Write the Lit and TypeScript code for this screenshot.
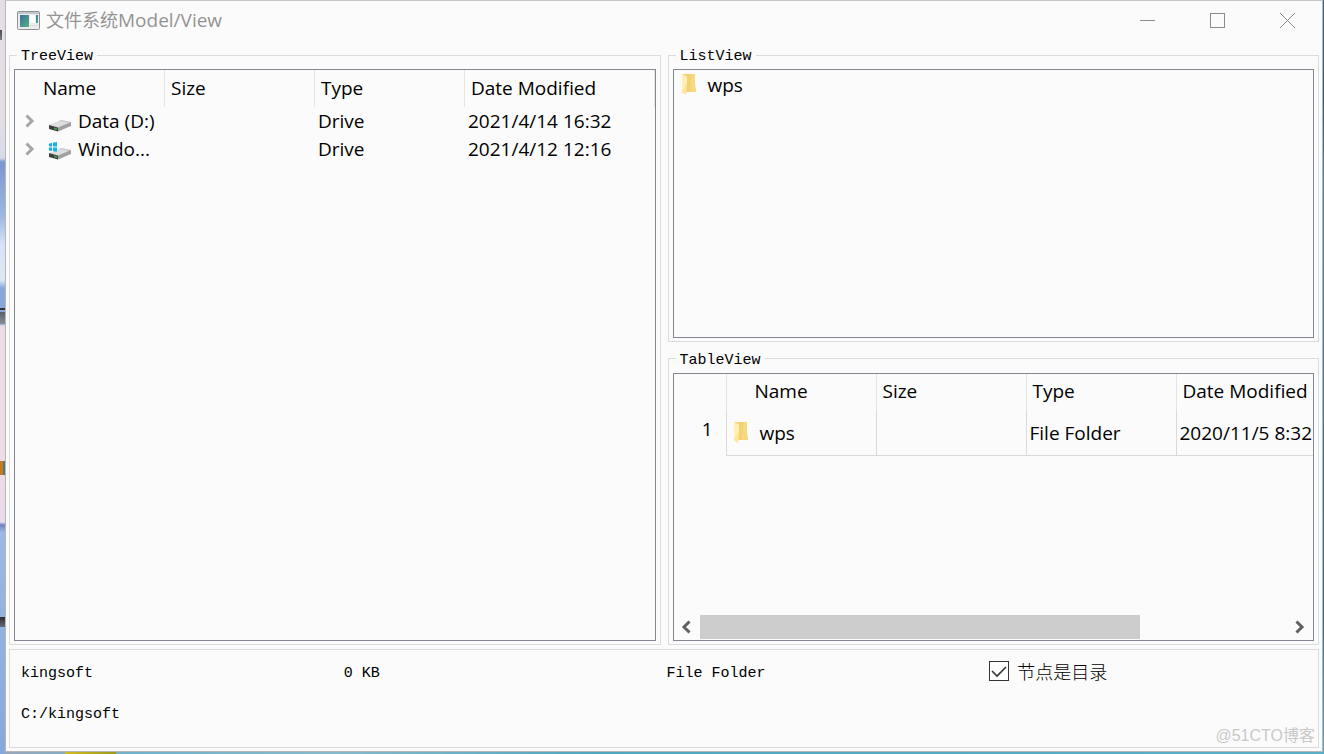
import { LitElement, html, css, svg } from "lit";
import { customElement, property, state } from "lit/decorators.js";

interface Entry {
  name: string;
  size: string;
  type: string;
  modified: string;
  system?: boolean;
}

const COLUMNS = ["Name", "Size", "Type", "Date Modified"];

const DRIVES: Entry[] = [
  { name: "Data (D:)", size: "", type: "Drive", modified: "2021/4/14 16:32" },
  { name: "Windo...", size: "", type: "Drive", modified: "2021/4/12 12:16", system: true },
];

const FOLDERS: Entry[] = [
  { name: "wps", size: "", type: "File Folder", modified: "2020/11/5 8:32" },
];

const folderIcon = html`<svg class="folder" width="16" height="22" viewBox="0 0 16 22" aria-hidden="true">
  <path d="M1 0H14V12L15 18H4L1 15Z" fill="#f3d275" />
  <path d="M1 0L6 2.500V11L5 21L1 18.500Z" fill="#ffe59a" />
  <path d="M1 0L6 3V9L1 17Z" fill="#fff0b4" />
  <path d="M11 0H14V10L15 18H9Z" fill="#f7d984" />
</svg>`;

const driveIcon = (system = false) => html`<svg width="24" height="24" viewBox="0 0 24 24" aria-hidden="true">
  <path d="M1 16L13 11L23 13L11 18.500Z" fill="#dedede" />
  <path d="M13 11L23 13L21 14L11 12Z" fill="#cbcbcb" />
  <path d="M10 18.500L23 13V17L10 22.500Z" fill="#a0a0a0" />
  <path d="M1 16L10 18.500V22.500L1 20Z" fill="#3e3e3e" />
  <path d="M6 18.500L9 19.300V21L6 20.200Z" fill="#3fa347" />
  ${system
    ? svg`<path d="M1 6.500L4 6V9.500H1ZM5 5.800L9 5V9.500H5ZM1 10.500H4V14L1 13.500ZM5 10.500H9V14.800L5 14.200Z" fill="#10b4f0" />`
    : ""}
</svg>`;

@customElement("group-box")
class GroupBox extends LitElement {
  @property() label = "";

  static styles = css`
    :host {
      display: grid;
      min-width: 0;
      min-height: 0;
    }
    .box {
      box-sizing: border-box;
      display: grid;
      grid-template-columns: minmax(0, 1fr);
      min-width: 0;
      min-height: 0;
      margin: 0;
      padding: 4px 4px 3px;
      border: 1px solid #dcdcdc;
    }
    .legend {
      height: 20px;
      margin-left: 3px;
      padding: 0 4px;
      font-size: 15px;
      line-height: 24px;
    }
  `;

  render() {
    return html`<fieldset class="box">
      <legend class="legend">${this.label}</legend>
      <slot></slot>
    </fieldset>`;
  }
}

@customElement("app-root")
class AppRoot extends LitElement {
  @state() private isDirectory = true;

  static styles = css`
    :host {
      display: block;
      color: #000;
      font-family: "Liberation Mono", "Noto Sans CJK SC", monospace;
      font-size: 15px;
    }
    .desktop {
      box-sizing: border-box;
      display: grid;
      height: 100vh;
      padding: 0 1px 2px 5px;
      background:
        linear-gradient(#343434, #343434) 0 308px / 5px 2px no-repeat,
        linear-gradient(#56616f, #8a8f94) 0 312px / 5px 12px no-repeat,
        linear-gradient(90deg, #c97a17 60%, #4c7596 60%) 0 461px / 5px 14px no-repeat,
        linear-gradient(#4a4a52, #7c7c88) 0 30px / 2px 10px no-repeat,
        linear-gradient(#2c2c34, #6c6c78) 0 617px / 5px 10px no-repeat,
        linear-gradient(90deg, #d0bc1e, #9c9a1c) 65px 100% / 51px 2px no-repeat,
        linear-gradient(
            #e4dde4 0 120px,
            #d6dbe9 158px,
            #7d97cf 162px,
            #9cb6e3 215px,
            #d7e4f5 245px,
            #dfe7f5 280px,
            #88a8dd 288px 324px,
            #ecdce6 326px 460px,
            #e9dbe8 522px,
            #6f80c4 525px,
            #9bb8e6 532px,
            #86a9dc 100%
          )
          0 0 / 5px 100% no-repeat,
        linear-gradient(#2c6e8c, #24607f 100px, #3f86a1 180px, #2b718d 620px, #58aac4) 100% 0 / 2px 100% no-repeat,
        linear-gradient(90deg, #9aa7b8, #6fb2cb 10%, #86b9cb 25%, #4fa6bf 45%, #5aafc7 100%);
    }
    .window {
      display: grid;
      grid-template-rows: auto minmax(0, 1fr) auto;
      min-width: 0;
      min-height: 0;
      border: 1px solid #b4b6b9;
      border-top-color: #c6c6c6;
      background: #fbfbfb;
    }
    .titlebar {
      display: flex;
      align-items: center;
      height: 38px;
      padding-left: 11px;
      color: #949494;
      font-family: "Open Sans", "Noto Sans CJK SC", sans-serif;
    }
    .title {
      flex: 1;
      margin: 0 0 0 6px;
      font-size: 18px;
      font-weight: 400;
      line-height: 24px;
    }
    .latin {
      font-size: 19px;
    }
    .caption {
      display: grid;
      place-items: center;
      width: 70px;
      height: 38px;
      padding: 0;
      border: 0;
      background: none;
    }
    .panes {
      display: grid;
      grid-template-columns: minmax(0, 1fr) minmax(0, 1fr);
      gap: 7px;
      min-height: 0;
      padding: 6px 3px 0;
    }
    .stack {
      display: grid;
      grid-template-rows: minmax(0, 1fr) minmax(0, 1fr);
      gap: 7px;
      min-height: 0;
    }
    .view {
      display: flex;
      flex-direction: column;
      min-width: 0;
      min-height: 0;
      overflow: hidden;
      border: 1px solid #828790;
      font-family: "Open Sans", "Noto Sans CJK SC", sans-serif;
      font-size: 19px;
      line-height: 28px;
    }
    .grid {
      width: 100%;
      table-layout: fixed;
      border-collapse: separate;
      border-spacing: 0;
      white-space: nowrap;
    }
    .grid.lined {
      width: 0;
    }
    .col {
      width: 150px;
    }
    .grid:not(.lined) .col:last-child {
      width: auto;
    }
    .rowcol {
      width: 53px;
    }
    .head {
      box-sizing: border-box;
      height: 37px;
      padding: 0 0 2px 6px;
      border-right: 1px solid #e4e4e4;
      font-weight: 400;
      text-align: left;
    }
    .head.first {
      padding-left: 28px;
    }
    .head.corner {
      padding: 0;
    }
    .cell {
      height: 28px;
      padding: 0 0 0 3px;
    }
    .item {
      display: flex;
      align-items: center;
    }
    .toggle {
      display: grid;
      place-items: center;
      width: 24px;
      height: 28px;
      margin-right: 6px;
      padding: 0;
      border: 0;
      background: none;
    }
    .item-name {
      margin-left: 6px;
    }
    .lined .cell {
      box-sizing: border-box;
      height: 45px;
      border-right: 1px solid #dadada;
      border-bottom: 1px solid #dadada;
    }
    .row-number {
      box-sizing: border-box;
      height: 45px;
      padding: 0 13px 8px 0;
      border-right: 1px solid #dadada;
      font-weight: 400;
      text-align: right;
    }
    .folder-item {
      display: flex;
      align-items: center;
      gap: 11px;
    }
    .list {
      margin: 0;
      padding: 1px 7px;
      list-style: none;
    }
    .lined .folder-item {
      padding-left: 3px;
    }
    .scrollbar {
      display: flex;
      height: 24px;
      margin-top: auto;
      margin-bottom: 1px;
    }
    .arrow {
      display: grid;
      flex: none;
      place-items: center;
      width: 26px;
      padding: 0;
      border: 0;
      background: none;
    }
    .track {
      flex: 1;
    }
    .thumb {
      height: 24px;
      background: #cdcdcd;
    }
    .details {
      display: grid;
      grid-template-columns: repeat(4, minmax(0, 1fr));
      align-items: start;
      row-gap: 14px;
      margin: 4px 3px 3px;
      padding: 9px 6px 20px 11px;
      border: 1px solid #dcdcdc;
      line-height: 24px;
    }
    .value {
      padding-top: 3px;
    }
    .path {
      grid-column: 1 / -1;
    }
    .check {
      display: flex;
      align-items: center;
      gap: 8px;
      font-family: "Noto Sans CJK SC", sans-serif;
      font-size: 18px;
      font-weight: 300;
    }
    .box {
      appearance: none;
      box-sizing: border-box;
      width: 20px;
      height: 20px;
      margin: 0;
      border: 1px solid #333;
      background: #fff;
    }
    .box:checked {
      background: #fff
        url("data:image/svg+xml,%3Csvg xmlns='http://www.w3.org/2000/svg' viewBox='0 0 18 18'%3E%3Cpath d='M2 9L7 14L16 5' fill='none' stroke='%23333' stroke-width='1.600'/%3E%3C/svg%3E");
    }
    .watermark {
      position: absolute;
      right: 9px;
      bottom: 6px;
      color: #c9c9c9;
      font-family: "Liberation Sans", "Noto Sans CJK SC", sans-serif;
      font-size: 16px;
      line-height: 24px;
    }
  `;

  private header() {
    return COLUMNS.map(
      (name, i) => html`<th scope="col" class="head ${i === 0 ? "first" : ""}">${name}</th>`,
    );
  }

  private columns() {
    return COLUMNS.map(() => html`<col class="col" />`);
  }

  private chevron(direction: "left" | "right", color: string) {
    const d = direction === "right" ? "M2.500 1.500L8 7L2.500 12.500" : "M9.500 1.500L4 7L9.500 12.500";
    return html`<svg width="13" height="14" viewBox="0 0 13 14" aria-hidden="true">
      <path d=${d} fill="none" stroke=${color} stroke-width="3" />
    </svg>`;
  }

  private tree() {
    return html`<div class="view">
      <table class="grid" aria-label="TreeView">
        <colgroup>${this.columns()}</colgroup>
        <thead><tr>${this.header()}</tr></thead>
        <tbody>
          ${DRIVES.map(
            (d) => html`<tr>
              <td class="cell">
                <div class="item">
                  <button class="toggle" aria-label="Expand ${d.name}">${this.chevron("right", "#a6a6a6")}</button>
                  ${driveIcon(d.system)}
                  <span class="item-name">${d.name}</span>
                </div>
              </td>
              <td class="cell">${d.size}</td>
              <td class="cell">${d.type}</td>
              <td class="cell">${d.modified}</td>
            </tr>`,
          )}
        </tbody>
      </table>
    </div>`;
  }

  private list() {
    return html`<div class="view">
      <ul class="list">
        ${FOLDERS.map((f) => html`<li class="folder-item">${folderIcon}<span>${f.name}</span></li>`)}
      </ul>
    </div>`;
  }

  private table() {
    const visibleShare = 75;
    return html`<div class="view">
      <table class="grid lined" aria-label="TableView">
        <colgroup><col class="rowcol" />${this.columns()}</colgroup>
        <thead><tr><td class="head corner"></td>${this.header()}</tr></thead>
        <tbody>
          ${FOLDERS.map(
            (f, i) => html`<tr>
              <th scope="row" class="row-number">${i + 1}</th>
              <td class="cell"><div class="folder-item">${folderIcon}<span>${f.name}</span></div></td>
              <td class="cell">${f.size}</td>
              <td class="cell">${f.type}</td>
              <td class="cell">${f.modified}</td>
            </tr>`,
          )}
        </tbody>
      </table>
      <div class="scrollbar">
        <button class="arrow" aria-label="Scroll left">${this.chevron("left", "#606060")}</button>
        <div class="track"><div class="thumb" style="width: ${visibleShare}%"></div></div>
        <button class="arrow" aria-label="Scroll right">${this.chevron("right", "#606060")}</button>
      </div>
    </div>`;
  }

  render() {
    return html`<div class="desktop">
      <main class="window">
        <header class="titlebar">
          <svg width="23" height="19" viewBox="0 0 23 19" aria-hidden="true">
            <defs>
              <linearGradient id="screen" x1="0" y1="0" x2="1" y2="1">
                <stop offset="0" stop-color="#3d6f9e" />
                <stop offset="1" stop-color="#55b184" />
              </linearGradient>
            </defs>
            <rect x="0.500" y="0.500" width="22" height="18" rx="1" fill="#ececec" stroke="#8e9297" />
            <path d="M1 2H22" stroke="#c3c6c9" stroke-width="2" />
            <rect x="3" y="4" width="9" height="12" fill="url(#screen)" />
            <rect x="13" y="4" width="5" height="8" fill="#fff" />
            <rect x="19" y="4" width="2" height="8" fill="url(#screen)" />
            <path d="M13 14.500H21" stroke="#dcdcdc" />
          </svg>
          <h1 class="title">文件系统<span class="latin">Model/View</span></h1>
          <button class="caption" aria-label="Minimize">
            <svg width="15" height="15" viewBox="0 0 15 15"><path d="M0 7.500H15" stroke="#8c8c8c" /></svg>
          </button>
          <button class="caption" aria-label="Maximize">
            <svg width="15" height="15" viewBox="0 0 15 15"><rect x="0.500" y="0.500" width="14" height="14" fill="none" stroke="#8c8c8c" /></svg>
          </button>
          <button class="caption" aria-label="Close">
            <svg width="15" height="15" viewBox="0 0 15 15"><path d="M0 0L15 15M15 0L0 15" stroke="#8c8c8c" /></svg>
          </button>
        </header>
        <div class="panes">
          <group-box label="TreeView">${this.tree()}</group-box>
          <div class="stack">
            <group-box label="ListView">${this.list()}</group-box>
            <group-box label="TableView">${this.table()}</group-box>
          </div>
        </div>
        <section class="details">
          <span class="value">kingsoft</span>
          <span class="value">0 KB</span>
          <span class="value">File Folder</span>
          <label class="check">
            <input
              class="box"
              type="checkbox"
              .checked=${this.isDirectory}
              @change=${(e: Event) => (this.isDirectory = (e.target as HTMLInputElement).checked)}
            />
            <span>节点是目录</span>
          </label>
          <span class="value path">C:/kingsoft</span>
        </section>
      </main>
      <span class="watermark">@51CTO博客</span>
    </div>`;
  }
}
